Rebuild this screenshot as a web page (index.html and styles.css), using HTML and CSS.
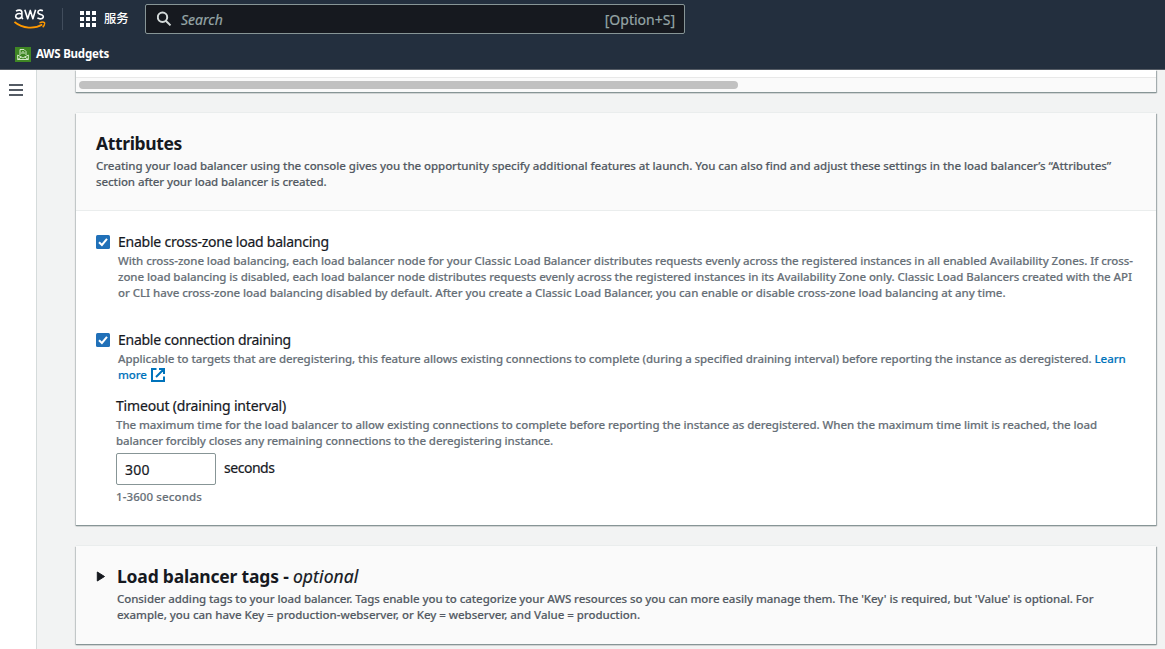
FILE: index.html
```html
<!DOCTYPE html>
<html lang="en">
<head>
<meta charset="utf-8">
<title>Create Classic Load Balancer</title>
<link rel="stylesheet" href="styles.css">
</head>
<body>
<header class="top">
  <div class="nav">
    <svg class="logo" width="32" height="22" viewBox="0 0 32 22" fill="none">
      <g stroke="#fff" stroke-width="1.600" stroke-linejoin="round">
        <path d="M2 3.100C4 1.700 7.900 1.400 7.900 4.600V9.500L8.800 11.200M7.900 5.900C5 5 1.700 5.500 1.700 8.300S6.500 11.600 7.900 8.300"/>
        <path d="M10.800 1.800L13.700 10.800L16.300 2.400L18.900 10.800L21.600 1.800"/>
        <path d="M28.900 2.700C26.800 1.700 23.900 2 23.900 4.200C23.900 7.200 29.300 5.700 29.300 8.500C29.300 11.300 25.500 11.300 23.400 9.900"/>
      </g>
      <path d="M.5 14C8.800 20.800 20.500 21.300 28.300 16.500" stroke="#f90" stroke-width="1.700"/>
      <path d="M25.400 15C27.500 13.900 29.700 14.100 30.500 14.600C30.900 15.800 30.200 17.800 28.700 19.300" stroke="#f90" stroke-width="1.400"/>
    </svg>
    <span class="divider"></span>
    <svg class="apps" width="16" height="16" viewBox="0 0 16 16" fill="#fff"><path d="M0 0h4v4H0zM6 0h4v4H6zM12 0h4v4h-4zM0 6h4v4H0zM6 6h4v4H6zM12 6h4v4h-4zM0 12h4v4H0zM6 12h4v4H6zM12 12h4v4h-4z"/></svg>
    <span class="services">服务</span>
    <div class="search">
      <svg width="16" height="16" viewBox="0 0 16 16" fill="none" stroke="#d5dbdb" stroke-width="2"><circle cx="5.500" cy="6.300" r="4.700"/><path d="M8.800 9.700L13.500 14.400"/></svg>
      <span class="hint">Search</span>
      <span class="shortcut">[Option+S]</span>
    </div>
  </div>
  <div class="favorites">
    <svg width="16" height="15" viewBox="0 0 16 15" fill="none"><path fill="#3f8624" d="M0 0h16v15H0z"/><g stroke="#e4f5da" stroke-width=".9"><path d="M5 8V2.500H9L11 4.500V8M7 7C6.500 4 9.300 3.500 9 7M2.700 8V12.500H13.300V8M2.700 8L8 11L13.300 8M2.700 12.500L6.300 10M13.300 12.500L9.700 10"/></g></svg>
    <span>AWS Budgets</span>
  </div>
</header>
<div class="body">
  <aside class="side"><svg width="14" height="12" viewBox="0 0 14 12" fill="#545b64"><path d="M0 0h14v2H0zM0 5h14v2H0zM0 10h14v2H0z"/></svg></aside>
  <main class="main">
    <section class="card tail"><div class="track"><div class="thumb"></div></div></section>
    <section class="card attributes">
      <div class="head">
        <h2><span class="t-h1">Attributes</span></h2>
        <p class="d dark"><span class="t-a1">Creating your load balancer using the console gives you the opportunity specify additional features at launch. You can also find and adjust these settings in the load balancer’s “Attributes”</span><br><span class="t-a2">section after your load balancer is created.</span></p>
      </div>
      <div class="content">
        <div class="option">
          <svg class="check" width="14" height="14" viewBox="0 0 14 14" fill="none"><rect width="14" height="14" rx="1.500" fill="#2070b8"/><path d="M3 7.300L5.900 10L11 3.800" stroke="#fff" stroke-width="2"/></svg>
          <div>
            <h3><span class="t-l1">Enable cross-zone load balancing</span></h3>
            <p class="d"><span class="t-b1">With cross-zone load balancing, each load balancer node for your Classic Load Balancer distributes requests evenly across the registered instances in all enabled Availability Zones. If cross-</span><br><span class="t-b2">zone load balancing is disabled, each load balancer node distributes requests evenly across the registered instances in its Availability Zone only. Classic Load Balancers created with the API</span><br><span class="t-b3">or CLI have cross-zone load balancing disabled by default. After you create a Classic Load Balancer, you can enable or disable cross-zone load balancing at any time.</span></p>
          </div>
        </div>
        <div class="option second">
          <svg class="check" width="14" height="14" viewBox="0 0 14 14" fill="none"><rect width="14" height="14" rx="1.500" fill="#2070b8"/><path d="M3 7.300L5.900 10L11 3.800" stroke="#fff" stroke-width="2"/></svg>
          <div>
            <h3><span class="t-l2">Enable connection draining</span></h3>
            <p class="d"><span class="t-c1">Applicable to targets that are deregistering, this feature allows existing connections to complete (during a specified draining interval) before reporting the instance as deregistered. <a>Learn</a></span><br><a class="more"><span class="t-c2">more</span><svg width="14" height="14" viewBox="0 0 14 14" fill="none" stroke="#0073bb" stroke-width="2"><path d="M5.500 1H1V13H13V8.500M8 1H13V6M13 1L5 9"/></svg></a></p>
          </div>
        </div>
        <div class="timeout">
          <h3><span class="t-l3">Timeout (draining interval)</span></h3>
          <p class="d"><span class="t-d1">The maximum time for the load balancer to allow existing connections to complete before reporting the instance as deregistered. When the maximum time limit is reached, the load</span><br><span class="t-d2">balancer forcibly closes any remaining connections to the deregistering instance.</span></p>
          <div class="field"><div class="input">300</div><span class="unit">seconds</span></div>
          <p class="d range">1-3600 seconds</p>
        </div>
      </div>
    </section>
    <section class="card tags">
      <svg class="caret" width="9" height="11" viewBox="0 0 9 11"><path d="M1.300 1L8.500 5.500L1.300 10Z" fill="#16191f" stroke="#16191f" stroke-linejoin="round"/></svg>
      <div>
        <h2><span class="t-h2">Load balancer tags - </span><em>optional</em></h2>
        <p class="d dark"><span class="t-e1">Consider adding tags to your load balancer. Tags enable you to categorize your AWS resources so you can more easily manage them. The 'Key' is required, but 'Value' is optional. For</span><br><span class="t-e2">example, you can have Key = production-webserver, or Key = webserver, and Value = production.</span></p>
      </div>
    </section>
  </main>
</div>
</body>
</html>
```
FILE: styles.css
```css
* { box-sizing: border-box; }
body { margin: 0; width: 1165px; height: 649px; overflow: hidden; background: #f2f3f3; color: #16191f; font-family: "Noto Sans", "Noto Sans CJK SC", sans-serif; }
svg { flex: none; }
h2, h3, p { margin: 0; white-space: nowrap; }
.top { position: relative; z-index: 1; height: 70px; background: #232f3e; border-bottom: 1px solid #545b64; color: #fff; }
.nav { display: flex; align-items: flex-start; height: 38px; padding-left: 14px; }
.logo { margin-top: 8px; }
.divider { width: 1px; height: 22px; margin: 8px 17px 0 16px; background: #414d5c; }
.apps { margin-top: 11px; }
.services { width: 25px; margin: 8px 16px 0 8px; font: 500 12.3px/20px "Noto Sans CJK SC", sans-serif; white-space: nowrap; }
.search { display: flex; align-items: center; width: 540px; height: 30px; margin-top: 4px; padding: 0 9px 0 11px; border: 1px solid #879596; border-radius: 2px; background: #16191f; color: #95a5a6; font-size: 14px; -webkit-text-stroke: .2px; }
.hint { margin-left: 8px; font-style: italic; }
.shortcut { margin-left: auto; }
.favorites { display: flex; align-items: center; gap: 5px; height: 32px; padding-left: 15px; font-size: 11.5px; line-height: 16px; font-weight: 700; letter-spacing: -.2px; }
.body { display: flex; height: 579px; }
.side { width: 37px; padding: 14px 0 0 9px; background: #fff; border-right: 1px solid #d5dbdb; }
.side svg { display: block; }
.main { width: 1128px; padding: 0 9px 0 39px; }
.card { width: 1080px; background: #fff; box-shadow: 0 1px 1px #879596, 1px 1px 1px rgba(0, 28, 36, .3), -1px 1px 1px rgba(0, 28, 36, .15), 0 -1px 0 #eaeded; }
.tail { height: 22px; padding-top: 7px; }
.track { height: 15px; padding: 3px; border-top: 1px solid #e8e8e8; background: #fafafa; }
.thumb { width: 659px; height: 8px; border-radius: 4px; background: #c1c1c1; }
.attributes { height: 412px; margin-top: 21px; }
.head { height: 98px; padding: 19px 20px; background: #fafafa; border-bottom: 1px solid #eaeded; }
h2 { font-size: 17.5px; line-height: 22px; font-weight: 700; }
h2 em { font-weight: 400; letter-spacing: .1px; -webkit-text-stroke: .2px; }
h3 { font-size: 14px; line-height: 22px; font-weight: 400; -webkit-text-stroke: .2px; }
.d { font-size: 11.5px; line-height: 16px; font-weight: 500; color: #687078; -webkit-text-stroke: .15px; }
.dark { margin-top: 4px; color: #545b64; }
.content { padding: 20px; }
.option { display: flex; gap: 8px; }
.check { margin-top: 4px; }
.second { margin-top: 28px; }
a { color: #0073bb; }
.more { display: inline-flex; align-items: center; gap: 4px; height: 16px; vertical-align: top; }
.timeout { padding-left: 20px; margin-top: 12px; }
.field { display: flex; margin-top: 4px; font-size: 14px; line-height: 30px; -webkit-text-stroke: .2px; }
.input { width: 100px; height: 32px; padding: 1px 8px; border: 1px solid #879596; border-radius: 2px; letter-spacing: .3px; }
.unit { margin-left: 8px; letter-spacing: -.47px; }
.range { margin-top: 4px; letter-spacing: .11px; }
.tags { display: flex; gap: 12px; height: 98px; margin-top: 21px; padding: 19px 20px; background: #fafafa; }
.caret { margin-top: 6px; }

/* Per-line tracking */
.t-h1 { letter-spacing: -.36px; }
.t-h2 { letter-spacing: -.19px; }
.t-l1 { letter-spacing: -.23px; }
.t-l2 { letter-spacing: -.26px; }
.t-l3 { letter-spacing: -.18px; }
.t-a1 { letter-spacing: -.054px; }
.t-a2 { letter-spacing: -.085px; }
.t-b1 { letter-spacing: -.073px; }
.t-b2 { letter-spacing: -.079px; }
.t-b3 { letter-spacing: -.054px; }
.t-c1 { letter-spacing: -.076px; }
.t-c2 { letter-spacing: -.1px; }
.t-d1 { letter-spacing: -.065px; }
.t-d2 { letter-spacing: -.1px; }
.t-e1 { letter-spacing: -.068px; }
.t-e2 { letter-spacing: -.033px; }
```
